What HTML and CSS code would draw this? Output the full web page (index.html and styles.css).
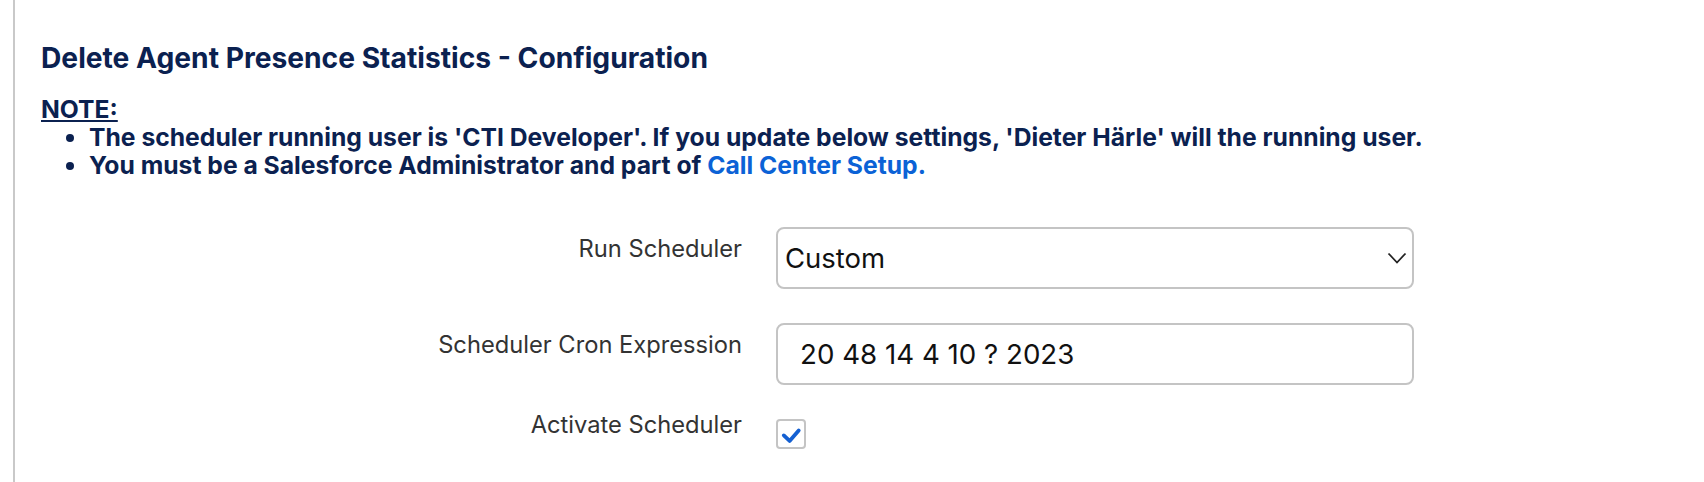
FILE: index.html
```html
<!DOCTYPE html>
<html lang="en">
<head>
<meta charset="utf-8">
<title>Delete Agent Presence Statistics - Configuration</title>
<link rel="stylesheet" href="styles.css">
</head>
<body>
<div class="panel">
  <h2 class="title">Delete Agent Presence Statistics - Configuration</h2>
  <div class="note">
    <div class="note-label">NOTE:</div>
    <ul class="note-list">
      <li>The scheduler running user is 'CTI Developer'. If you update below settings, 'Dieter Härle' will the running user.</li>
      <li>You must be a Salesforce Administrator and part of <a class="link" href="#">Call Center Setup.</a></li>
    </ul>
  </div>
  <div class="form">
    <div class="form-row">
      <div class="label">Run Scheduler</div>
      <div class="field select-wrap">
        <select class="select">
          <option>Custom</option>
        </select>
        <svg class="chevron" width="20" height="12" viewBox="0 0 20 12"><path d="M1.5 1.5 L10 10.5 L18.5 1.5" fill="none" stroke="#222" stroke-width="1.8"/></svg>
      </div>
    </div>
    <div class="form-row row-cron">
      <div class="label">Scheduler Cron Expression</div>
      <div class="field">
        <input class="input" type="text" value="20 48 14 4 10 ? 2023">
      </div>
    </div>
    <div class="form-row row-check">
      <div class="label label-check">Activate Scheduler</div>
      <div class="field">
        <span class="checkbox">
          <svg width="26" height="26" viewBox="0 0 26 26"><path d="M5.8 14.4 L11.6 19.9 L20.7 9.4" fill="none" stroke="#1460d2" stroke-width="3.8" stroke-linecap="round" stroke-linejoin="round"/></svg>
        </span>
      </div>
    </div>
  </div>
</div>
</body>
</html>
```
FILE: styles.css
```css
html, body {
  margin: 0;
  padding: 0;
  background: #ffffff;
}
body {
  font-family: Inter, "Liberation Sans", sans-serif;
  padding-left: 13px;
}
.panel {
  border-left: 2px solid #c9c9c9;
  padding: 42px 0 0 26px;
  min-height: 482px;
  box-sizing: border-box;
}
.title {
  margin: 0;
  font-size: 28.2px;
  line-height: 32px;
  font-weight: 700;
  color: #0b2150;
}
.note {
  margin-top: 21px;
  color: #0b2150;
  font-weight: 700;
  font-size: 24.7px;
  line-height: 28px;
}
.note-label {
  text-decoration: underline;
  text-underline-offset: 2px;
}
.note-list {
  margin: 0;
  padding-left: 48px;
}
.link {
  color: #0b62d6;
  text-decoration: none;
}
.form {
  margin-top: 48px;
  display: flex;
  flex-direction: column;
}
.form-row {
  display: flex;
  align-items: flex-start;
  gap: 34px;
}
.row-cron {
  margin-top: 34px;
}
.row-check {
  margin-top: 26px;
}
.label {
  flex: 0 0 701px;
  text-align: right;
  font-size: 23.7px;
  line-height: 28px;
  padding-top: 8px;
  color: #333333;
}
.label-check {
  padding-top: 0;
}
.field {
  flex: 0 0 638px;
  display: flex;
  align-items: flex-start;
}
.row-check .field {
  padding-top: 8px;
}
.select-wrap {
  position: relative;
}
.select {
  appearance: none;
  -webkit-appearance: none;
  width: 100%;
  height: 62px;
  border: 2px solid #c4c4c4;
  border-radius: 8px;
  background: #fff;
  padding: 0 0 0 7px;
  font-family: Inter, "Liberation Sans", sans-serif;
  font-size: 27.5px;
  color: #111;
}
.chevron {
  position: absolute;
  right: 7px;
  top: 25px;
}
.input {
  width: 100%;
  height: 62px;
  box-sizing: border-box;
  border: 2px solid #c4c4c4;
  border-radius: 8px;
  padding: 0 0 0 22px;
  font-family: Inter, "Liberation Sans", sans-serif;
  font-size: 27.7px;
  color: #111;
}
.checkbox {
  width: 30px;
  height: 30px;
  box-sizing: border-box;
  border: 2px solid #c4c4c4;
  border-radius: 4px;
  display: flex;
  align-items: center;
  justify-content: center;
}
```
